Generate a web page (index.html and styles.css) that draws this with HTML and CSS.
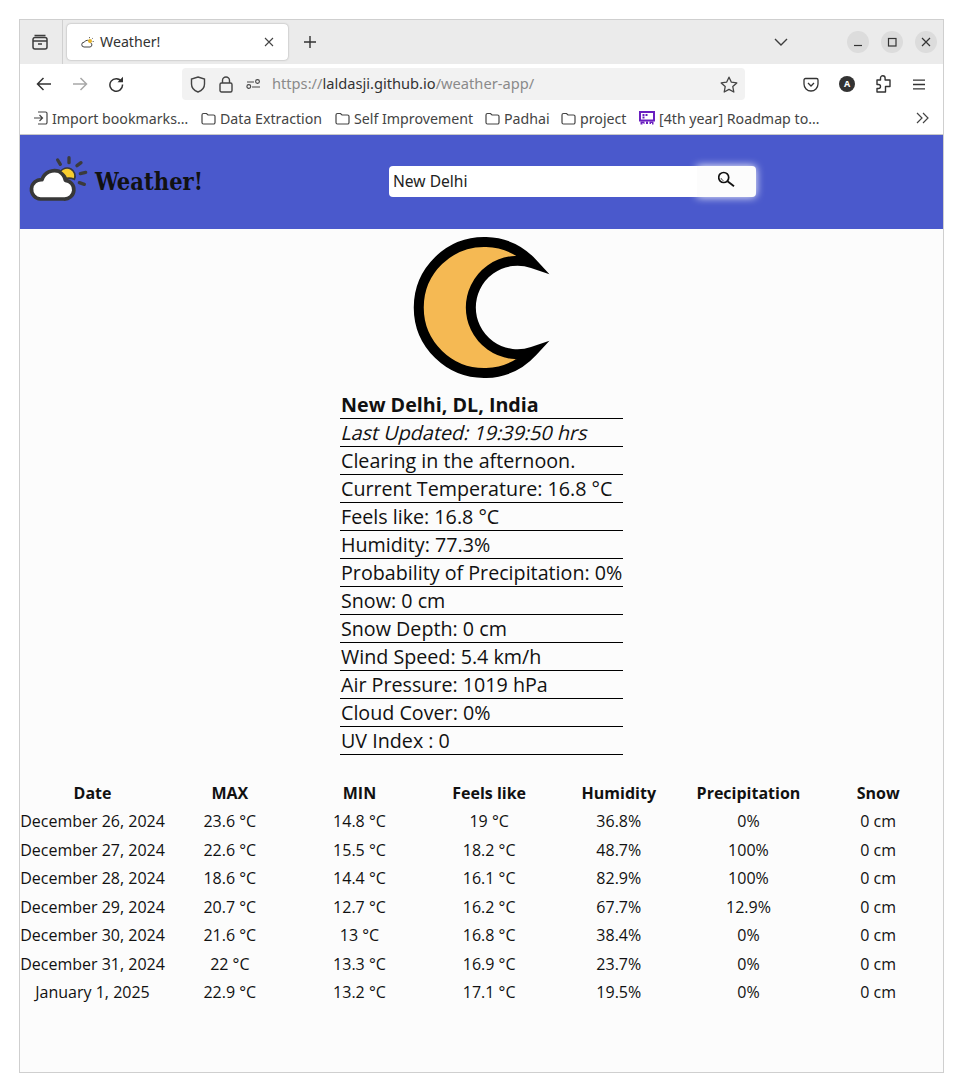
FILE: index.html
```html
<!DOCTYPE html>
<html lang="en">
<head>
<meta charset="utf-8">
<title>Weather!</title>
<link rel="stylesheet" href="styles.css">
</head>
<body>
<div class="window">
  <div class="tabstrip">
    <div class="tabview">
      <svg class="ic" width="18" height="18" viewBox="0 0 18 18"><path d="M3.500 2.500h11M2 6.500a2 2 0 0 1 2-2h10a2 2 0 0 1 2 2v7.500a2 2 0 0 1-2 2H4a2 2 0 0 1-2-2zM2 8h14M7 11h4" fill="none" stroke="#3d3d3d" stroke-width="1.500"/></svg>
    </div>
    <div class="tab">
      <svg class="favicon" width="13" height="13" viewBox="0 0 13 13"><path d="M3 11h6a2.200 2.200 0 0 0 .3-4.300 3.200 3.200 0 0 0-6-.5A2.400 2.400 0 0 0 3 11z" fill="#fff" stroke="#444" stroke-width="1"/><circle cx="9" cy="5" r="2" fill="#e5b52a"/><path d="M8.500 1v1.200M11.800 2.200l-.9.8M12.800 5.500h-1.200" stroke="#444" stroke-width=".8"/></svg>
      <span class="tab-title">Weather!</span>
      <svg class="tab-close" width="10" height="10" viewBox="0 0 10 10"><path d="M1 1l8 8M9 1l-8 8" stroke="#444" stroke-width="1.100"/></svg>
    </div>
    <svg class="newtab" width="14" height="14" viewBox="0 0 14 14"><path d="M7 1v12M1 7h12" stroke="#333" stroke-width="1.400"/></svg>
    <svg class="tablist" width="14" height="8" viewBox="0 0 14 8"><path d="M1 1l6 6 6-6" fill="none" stroke="#3d3d3d" stroke-width="1.400"/></svg>
    <div class="winbtn"><svg width="10" height="10" viewBox="0 0 10 10"><path d="M1 8.500h8" stroke="#333" stroke-width="1.200"/></svg></div>
    <div class="winbtn"><svg width="10" height="10" viewBox="0 0 10 10"><rect x="1.500" y="1.500" width="7.500" height="7.500" fill="none" stroke="#333" stroke-width="1.200"/></svg></div>
    <div class="winbtn"><svg width="10" height="10" viewBox="0 0 10 10"><path d="M1 1l8 8M9 1l-8 8" stroke="#333" stroke-width="1.200"/></svg></div>
  </div>

  <div class="toolbar">
    <svg class="tb-back" width="16" height="14" viewBox="0 0 16 14"><path d="M15 7H1.500M7.500 1L1.500 7l6 6" fill="none" stroke="#333" stroke-width="1.500"/></svg>
    <svg class="tb-fwd" width="16" height="14" viewBox="0 0 16 14"><path d="M1 7h13.500M8.500 1l6 6-6 6" fill="none" stroke="#a8a8a8" stroke-width="1.500"/></svg>
    <svg class="tb-reload" width="16" height="16" viewBox="0 0 16 16"><path d="M13.500 5.500A6.300 6.300 0 1 0 14.500 8.500" fill="none" stroke="#333" stroke-width="1.500"/><path d="M15 .8V6.300H9.500z" fill="#333"/></svg>
    <div class="urlbar">
      <svg class="url-shield" width="16" height="17" viewBox="0 0 16 17"><path d="M8 1l6.500 2v5c0 4-3 6.800-6.500 8C4.500 14.800 1.500 12 1.500 8V3z" fill="none" stroke="#444" stroke-width="1.400"/></svg>
      <svg class="url-lock" width="14" height="17" viewBox="0 0 14 17"><path d="M3.500 7V4.500a3.500 3.500 0 0 1 7 0V7M2.500 7h9A1.500 1.500 0 0 1 13 8.500v6A1.500 1.500 0 0 1 11.500 16h-9A1.500 1.500 0 0 1 1 14.500v-6A1.500 1.500 0 0 1 2.500 7z" fill="none" stroke="#444" stroke-width="1.400"/></svg>
      <svg class="url-perm" width="15" height="10" viewBox="0 0 15 10"><path d="M1 3h7M6 8h8" stroke="#444" stroke-width="1.200"/><circle cx="11.500" cy="2.500" r="1.900" fill="none" stroke="#444" stroke-width="1.100"/><circle cx="2.800" cy="7.500" r="1.900" fill="none" stroke="#444" stroke-width="1.100"/></svg>
      <span class="url"><span class="url-dim">https://</span>laldasji.github.io<span class="url-dim">/weather-app/</span></span>
      <svg class="url-star" width="18" height="17" viewBox="0 0 18 17"><path d="M9 1.200l2.400 5 5.400.7-4 3.700 1 5.400L9 13.400 4.200 16l1-5.400-4-3.700 5.400-.7z" fill="none" stroke="#444" stroke-width="1.300" stroke-linejoin="round"/></svg>
    </div>
    <svg class="tb-pocket" width="16" height="15" viewBox="0 0 16 15"><path d="M2.500 1.500h11a1.500 1.500 0 0 1 1.500 1.500v4a7 7 0 0 1-14 0V3a1.500 1.500 0 0 1 1.500-1.500z" fill="none" stroke="#333" stroke-width="1.300"/><path d="M5 6l3 3 3-3" fill="none" stroke="#333" stroke-width="1.300"/></svg>
    <div class="avatar">A</div>
    <svg class="tb-ext" width="15" height="18" viewBox="0 0 15 18"><path d="M1 5H4.500V3a2.300 2.300 0 0 1 4.600 0V5H14V11.500H9.500V17H1V13.500H2.500a2 2 0 0 0 0-4H1Z" fill="none" stroke="#333" stroke-width="1.400" stroke-linejoin="round"/></svg>
    <svg class="tb-menu" width="14" height="11" viewBox="0 0 14 11"><path d="M1 1.200h12M1 5.500h12M1 9.800h12" stroke="#333" stroke-width="1.300"/></svg>
  </div>

  <div class="bookmarks">
    <a class="bm bm-import"><svg width="15" height="14" viewBox="0 0 15 14"><path d="M5 1h7.500a1.500 1.500 0 0 1 1.500 1.500v9a1.500 1.500 0 0 1-1.500 1.500H5M1 7h8.500M6.500 4l3 3-3 3" fill="none" stroke="#444" stroke-width="1.200"/></svg>Import bookmarks…</a>
    <a class="bm bm-data"><svg class="folder" width="15" height="13" viewBox="0 0 15 13"><path d="M1 3a1.500 1.500 0 0 1 1.500-1.500h3L7 3h5.500A1.500 1.500 0 0 1 14 4.500v6a1.500 1.500 0 0 1-1.500 1.500h-10A1.500 1.500 0 0 1 1 10.500z" fill="none" stroke="#444" stroke-width="1.200"/></svg>Data Extraction</a>
    <a class="bm bm-self"><svg class="folder" width="15" height="13" viewBox="0 0 15 13"><path d="M1 3a1.500 1.500 0 0 1 1.500-1.500h3L7 3h5.500A1.500 1.500 0 0 1 14 4.500v6a1.500 1.500 0 0 1-1.500 1.500h-10A1.500 1.500 0 0 1 1 10.500z" fill="none" stroke="#444" stroke-width="1.200"/></svg>Self Improvement</a>
    <a class="bm bm-padhai"><svg class="folder" width="15" height="13" viewBox="0 0 15 13"><path d="M1 3a1.500 1.500 0 0 1 1.500-1.500h3L7 3h5.500A1.500 1.500 0 0 1 14 4.500v6a1.500 1.500 0 0 1-1.500 1.500h-10A1.500 1.500 0 0 1 1 10.500z" fill="none" stroke="#444" stroke-width="1.200"/></svg>Padhai</a>
    <a class="bm bm-project"><svg class="folder" width="15" height="13" viewBox="0 0 15 13"><path d="M1 3a1.500 1.500 0 0 1 1.500-1.500h3L7 3h5.500A1.500 1.500 0 0 1 14 4.500v6a1.500 1.500 0 0 1-1.500 1.500h-10A1.500 1.500 0 0 1 1 10.500z" fill="none" stroke="#444" stroke-width="1.200"/></svg>project</a>
    <a class="bm bm-road"><svg width="16" height="14" viewBox="0 0 16 14"><path d="M0 0h16v10.500h-16z" fill="#6a1fc0"/><path d="M2 2h12v6.500H2z" fill="#fff"/><path d="M3.500 3h2v2h-2zM6.500 3h2v2h-2zM3.500 5.500h2v2h-2z" fill="#6a1fc0"/><path d="M1.500 10.500h4V13h-1v-1h-1v1.500h-2zM7 10.500h2V13H7zM10.500 10.500h4v3h-1.500V12h-1v1h-1.500z" fill="#6a1fc0"/></svg>[4th year] Roadmap to…</a>
    <svg class="bm-more" width="13" height="12" viewBox="0 0 13 12"><path d="M1 1l5 5-5 5M7 1l5 5-5 5" fill="none" stroke="#444" stroke-width="1.200"/></svg>
  </div>

  <div class="page">
    <header class="site-header">
      <div class="brand">
        <svg class="logo" width="64" height="49" viewBox="20 40 192 147">
          <path d="M60 175H130A28 28 0 0 0 135 119 37 37 0 0 0 116 92 40 40 0 0 0 65 117 29 29 0 0 0 60 175Z" fill="#fff" stroke="#383838" stroke-width="11" stroke-linejoin="round"/>
          <path d="M120 93a24 24 0 0 1 42 23 38 38 0 0 0-24-3 37 37 0 0 0-18-20z" fill="#f8cd2f" stroke="#383838" stroke-width="5"/>
          <path d="M112 58l8 13M146 51v15M182 66l-12 9M196 95l-16 4M192 131l-15-5" stroke="#3b3b3b" stroke-width="10" stroke-linecap="round"/>
        </svg>
        <h1 class="brand-title">Weather!</h1>
      </div>
      <form class="search">
        <input class="search-input" type="text" value="New Delhi">
        <button class="search-btn" type="button" aria-label="Search">
          <svg width="18" height="18" viewBox="0 0 18 18"><circle cx="5.700" cy="7.500" r="5" fill="#fff" stroke="#111" stroke-width="1.700"/><path d="M3 8a3 3 0 0 0 2.500 2.500" fill="none" stroke="#555" stroke-width="1"/><path d="M9.500 11.200l6.500 5" stroke="#111" stroke-width="1.800"/></svg>
        </button>
      </form>
    </header>

    <main class="current">
      <svg class="moon" width="140" height="144" viewBox="412.700 235 140 144">
        <path d="M533.300 263.300A65.500 65.500 0 1 0 533.300 351.700A46.700 46.700 0 1 1 533.300 263.300Z" fill="#f5b953" stroke="#000" stroke-width="10" stroke-miterlimit="12"/>
      </svg>
      <ul class="facts">
        <li class="fact fact-place">New Delhi, DL, India</li>
        <li class="fact"><span class="fact-time">Last Updated: 19:39:50 hrs</span></li>
        <li class="fact">Clearing in the afternoon.</li>
        <li class="fact">Current Temperature: 16.8 °C</li>
        <li class="fact">Feels like: 16.8 °C</li>
        <li class="fact">Humidity: 77.3%</li>
        <li class="fact">Probability of Precipitation: 0%</li>
        <li class="fact">Snow: 0 cm</li>
        <li class="fact">Snow Depth: 0 cm</li>
        <li class="fact">Wind Speed: 5.4 km/h</li>
        <li class="fact">Air Pressure: 1019 hPa</li>
        <li class="fact">Cloud Cover: 0%</li>
        <li class="fact">UV Index : 0</li>
      </ul>
    </main>

    <table class="forecast">
      <thead>
        <tr><th class="col-date">Date</th><th>MAX</th><th>MIN</th><th>Feels like</th><th>Humidity</th><th>Precipitation</th><th>Snow</th></tr>
      </thead>
      <tbody>
        <tr><td>December 26, 2024</td><td>23.6 °C</td><td>14.8 °C</td><td>19 °C</td><td>36.8%</td><td>0%</td><td>0 cm</td></tr>
        <tr><td>December 27, 2024</td><td>22.6 °C</td><td>15.5 °C</td><td>18.2 °C</td><td>48.7%</td><td>100%</td><td>0 cm</td></tr>
        <tr><td>December 28, 2024</td><td>18.6 °C</td><td>14.4 °C</td><td>16.1 °C</td><td>82.9%</td><td>100%</td><td>0 cm</td></tr>
        <tr><td>December 29, 2024</td><td>20.7 °C</td><td>12.7 °C</td><td>16.2 °C</td><td>67.7%</td><td>12.9%</td><td>0 cm</td></tr>
        <tr><td>December 30, 2024</td><td>21.6 °C</td><td>13 °C</td><td>16.8 °C</td><td>38.4%</td><td>0%</td><td>0 cm</td></tr>
        <tr><td>December 31, 2024</td><td>22 °C</td><td>13.3 °C</td><td>16.9 °C</td><td>23.7%</td><td>0%</td><td>0 cm</td></tr>
        <tr><td>January 1, 2025</td><td>22.9 °C</td><td>13.2 °C</td><td>17.1 °C</td><td>19.5%</td><td>0%</td><td>0 cm</td></tr>
      </tbody>
    </table>
  </div>
</div>
</body>
</html>
```

FILE: styles.css
```css
* { box-sizing: border-box; }
html, body { margin: 0; padding: 0; background: #fff; }
body { padding: 19px 19px 0; width: 963px; height: 1092px; overflow: hidden; font-family: "Open Sans", sans-serif; color: #111; }
svg { display: block; flex: none; }

.window { width: 925px; height: 1054px; border: 1px solid #cfcfcf; display: flex; flex-direction: column; background: #fcfcfc; }

.tabstrip { height: 44px; background: #ebebeb; display: flex; align-items: center; flex: none; }
.tabview { width: 43px; height: 44px; border-right: 1px solid #d0d0d0; display: flex; align-items: center; justify-content: center; padding-right: 2px; }
.tab { margin-left: 4px; width: 221px; height: 36px; background: #fff; border-radius: 4px; box-shadow: 0 0 2px rgba(0,0,0,.35); display: flex; align-items: center; padding-left: 14px; }
.favicon { margin-right: 6px; }
.tab-title { font: 14.2px "Noto Sans", sans-serif; color: #333; width: 164px; padding-bottom: 2px; }
.newtab { margin-left: 15px; }
.tablist { margin-left: 457px; }
.winbtn { width: 22px; height: 22px; border-radius: 50%; background: #dcdcdc; display: flex; align-items: center; justify-content: center; margin-left: 12px; }
.tablist + .winbtn { margin-left: 59px; }

.toolbar { height: 40px; background: #fff; display: flex; align-items: center; flex: none; padding-left: 16px; }
.tb-fwd { margin-left: 20px; }
.tb-reload { margin-left: 20px; }
.urlbar { margin-left: 58px; width: 563px; height: 32px; background: #f2f2f2; border-radius: 4px; display: flex; align-items: center; padding-left: 8px; }
.url-lock { margin-left: 13px; }
.url-perm { margin-left: 13px; }
.url { margin-left: 11px; font: 14.65px "Noto Sans", sans-serif; color: #333; width: 448px; white-space: nowrap; padding-bottom: 2px; }
.url-dim { color: #8a8a8a; }
.tb-pocket { margin-left: 58px; }
.avatar { margin-left: 20px; width: 16px; height: 16px; border-radius: 50%; background: #333; color: #fff; font: bold 9px/16px "Noto Sans", sans-serif; text-align: center; }
.tb-ext { margin-left: 21px; }
.tb-menu { margin-left: 21px; }

.bookmarks { height: 31px; background: #fff; border-bottom: 1px solid #c8c8c8; display: flex; align-items: center; flex: none; padding: 0 0 2px 13px; }
.bm { display: flex; align-items: center; font: 14.2px "Noto Sans", sans-serif; color: #444; white-space: nowrap; gap: 4px; }
.bm-import { width: 168px; }
.bm-data { width: 134px; }
.bm-self { width: 150px; }
.bm-padhai { width: 76px; }
.bm-project { width: 78px; }
.bm-road { width: 277px; }

.page { flex: 1; display: flex; flex-direction: column; background: #fcfcfc; }
.site-header { height: 94px; background: #4a59cc; display: flex; align-items: center; flex: none; }
.brand { width: 369px; display: flex; align-items: center; padding-left: 7px; }
.logo { margin-top: -8px; }
.brand-title { margin: 0 0 0 4px; font: bold 23.5px "DejaVu Serif Condensed", "DejaVu Serif", serif; font-stretch: condensed; color: #111; }
.search { display: flex; width: 367px; height: 31px; margin-bottom: 2px; }
.search-input { width: 308px; height: 31px; border: 0; border-radius: 4px 0 0 4px; background: #fff; padding: 0 4px; font: 15.6px "Noto Sans", sans-serif; color: #222; outline: 0; }
.search-btn { width: 59px; height: 31px; border: 0; border-radius: 0 4px 4px 0; background: #fcfcfc; box-shadow: 0 0 8px #fff; padding: 0 0 4px 0; display: flex; align-items: center; justify-content: center; }

.current { display: flex; flex-direction: column; align-items: center; padding-top: 6px; }
.facts { list-style: none; margin: 12px 0 0; padding: 0; width: 283px; }
.fact { height: 28px; line-height: 27px; font-size: 19.7px; border-bottom: 1px solid #000; white-space: nowrap; color: #111; padding-left: 1px; }
.fact-place { font-weight: 700; }
.fact-time { display: inline-block; transform: skewX(-14deg); font-size: 19.8px; margin-left: 1px; }

.forecast { width: 100%; border-collapse: collapse; margin-top: 24px; table-layout: fixed; font-size: 16px; }
.forecast th, .forecast td { text-align: center; padding: 0; height: 28.45px; font-size: 16px; color: #111; white-space: nowrap; }
.forecast th { font-weight: 700; height: 28.2px; }
.col-date { width: 145px; }
```
